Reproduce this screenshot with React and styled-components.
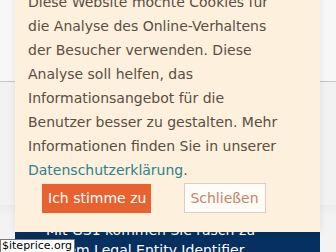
import React from "react";
import styled, { createGlobalStyle } from "styled-components";

const Global = createGlobalStyle`
  html, body { margin: 0; padding: 0; }
  body { background: #f3f3f3; font-family: "DejaVu Sans", Verdana, sans-serif; }
`;

const Page = styled.div`
  position: relative;
  width: 336px;
  height: 252px;
  overflow: hidden;
  background: #f2f2f2;
`;

const Header = styled.header`
  height: 81px;
  background: #f7f7f7;
  border-bottom: 1px solid #c4c4c4;
`;

const Main = styled.main`
  padding: 0 16px 0 15px;
  background: linear-gradient(#ececec, #f3f3f3 12px);
`;

const Teaser = styled.section`
  margin-top: 123px;
  background: #06305f;
  color: #ffffff;
  padding: 15px 20px 20px 31px;
  font-size: 14px;
  line-height: 20px;
`;

const Banner = styled.div`
  position: absolute;
  left: 15px;
  top: -10px;
  width: 305px;
  box-sizing: border-box;
  padding: 0 36px 19px 13px;
  background: #fdf0dc;
  box-shadow: 0 0 8px rgba(0, 0, 0, 0.08);
  color: #5a4e44;
  font-size: 14px;
  line-height: 24px;
`;

const Message = styled.p`
  margin: 0;
`;

const Link = styled.a`
  color: #2e8290;
  text-decoration: none;
`;

const Actions = styled.div`
  display: flex;
  align-items: center;
  gap: 33px;
  margin-top: 1px;
  padding-left: 14px;
`;

const Button = styled.button`
  font-family: "DejaVu Sans", Verdana, sans-serif;
  font-size: 14px;
  line-height: 20px;
  border-radius: 0;
  cursor: pointer;
  padding: ${(p) => (p.$primary ? "4px 5px 5px 6px" : "4px 6px 4px 5px")};
  background: ${(p) => (p.$primary ? "#e8612e" : "#fffcf8")};
  color: ${(p) => (p.$primary ? "#ffffff" : "#c4846a")};
  border: ${(p) => (p.$primary ? "none" : "1px solid #d6cfc7")};
`;

const Watermark = styled.div`
  position: absolute;
  left: 0;
  bottom: 0;
  background: #ffffff;
  border: 1px solid #777;
  border-bottom: none;
  color: #000;
  font-family: "DejaVu Sans", sans-serif;
  font-size: 11px;
  line-height: 11px;
  padding: 0 2px 1px 1px;
`;

export default function App() {
  return (
    <Page>
      <Global />
      <Header />
      <Main>
        <Teaser>
          Mit GS1 kommen Sie rasch zu
          <br />
          einem Legal Entity Identifier
        </Teaser>
      </Main>
      <Banner>
        <Message>
          Diese Website möchte Cookies für die Analyse des Online-Verhaltens
          der Besucher verwenden. Diese Analyse soll helfen, das
          Informationsangebot für die Benutzer besser zu gestalten. Mehr
          Informationen finden Sie in unserer{" "}
          <Link href="#">Datenschutzerklärung</Link>.
        </Message>
        <Actions>
          <Button $primary>Ich stimme zu</Button>
          <Button>Schließen</Button>
        </Actions>
      </Banner>
      <Watermark>$iteprice.org</Watermark>
    </Page>
  );
}
